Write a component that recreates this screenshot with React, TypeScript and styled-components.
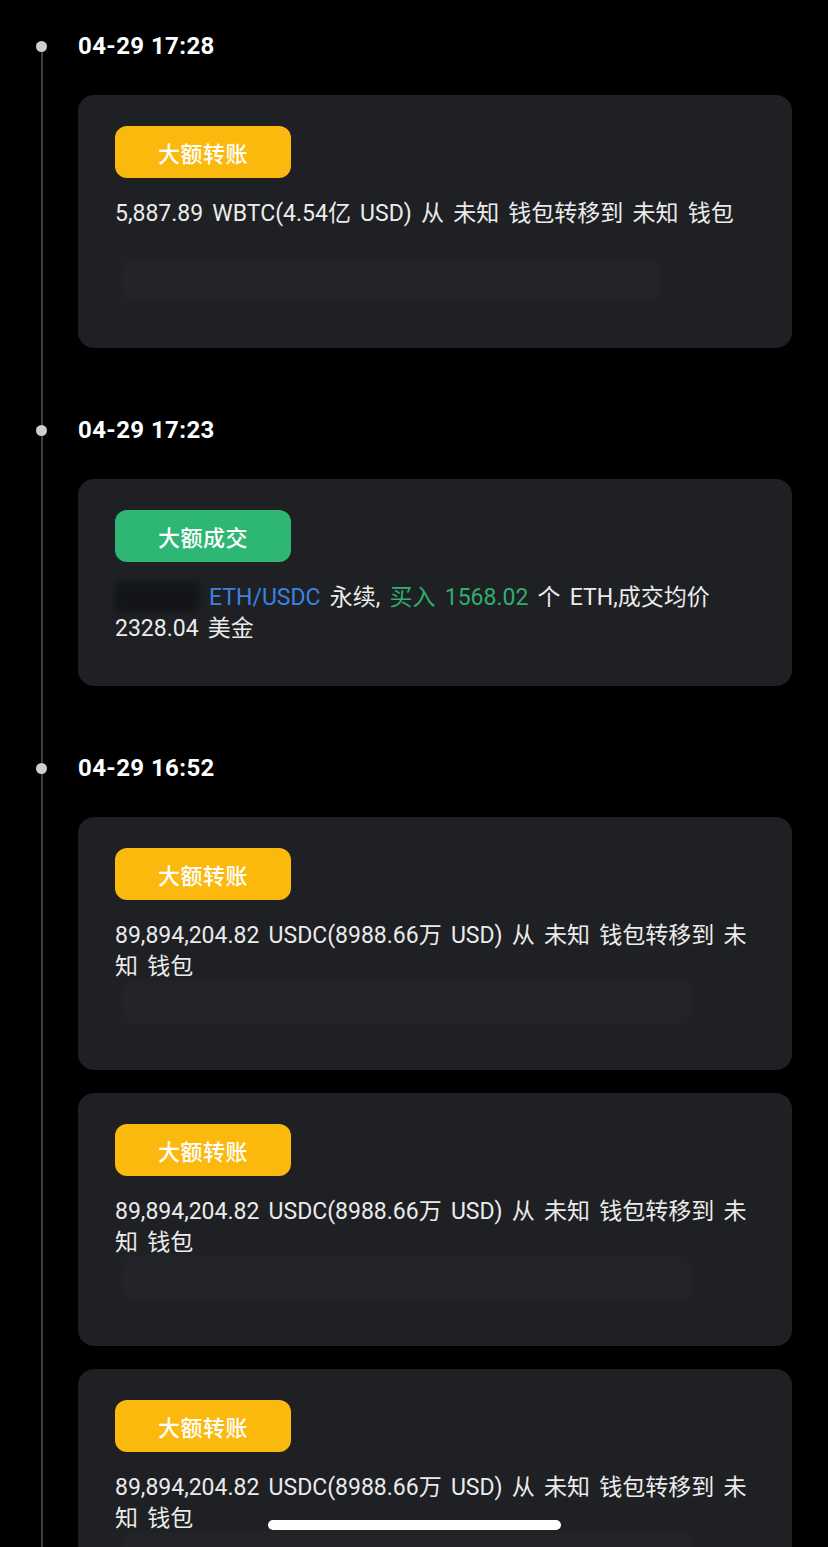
import React from "react";
import styled, { createGlobalStyle } from "styled-components";

const GlobalStyle = createGlobalStyle`
  html, body {
    margin: 0;
    padding: 0;
    background: #000;
  }
  body {
    font-family: Roboto, "Noto Sans CJK SC", sans-serif;
    color: #e8e8e8;
    overflow: hidden;
  }
`;

const Page = styled.div`
  position: relative;
  height: 1547px;
  overflow: hidden;
  padding: 0 36px 0 78px;
  box-sizing: border-box;
  display: flex;
  flex-direction: column;
  gap: 36px;
  &::before {
    content: "";
    position: absolute;
    left: 41px;
    top: 46px;
    bottom: 0;
    width: 2px;
    background: #3e3e40;
  }
`;

const Group = styled.section`
  display: flex;
  flex-direction: column;
  gap: 23px;
`;

const Header = styled.div`
  position: relative;
  height: 30px;
  margin-top: 31px;
  margin-bottom: 11px;
  display: flex;
  align-items: center;
  font-family: Roboto, sans-serif;
  font-weight: 700;
  font-size: 24px;
  color: #fff;
  letter-spacing: 0.4px;
`;

const Dot = styled.span`
  position: absolute;
  left: -42px;
  top: 50%;
  width: 11px;
  height: 11px;
  margin-top: -5.5px;
  border-radius: 50%;
  background: #cfcfcf;
`;

const Card = styled.div`
  background: #1e2023;
  border-radius: 16px;
  padding: 31px 32px 42px 37px;
  display: flex;
  flex-direction: column;
  align-items: flex-start;
  position: relative;
  z-index: 1;
`;

const Badge = styled.div<{ $tone: "yellow" | "green" }>`
  width: 176px;
  height: 52px;
  border-radius: 12px;
  background: ${(p) => (p.$tone === "yellow" ? "#fbb90d" : "#2db674")};
  color: #fff;
  font-family: "Noto Sans CJK SC", sans-serif;
  font-size: 22px;
  font-weight: 500;
  display: flex;
  align-items: center;
  justify-content: center;
  letter-spacing: 0.5px;
`;

const Body = styled.p`
  margin: 20px 0 0;
  font-family: Roboto, "Noto Sans CJK SC", sans-serif;
  font-size: 23px;
  line-height: 31px;
  word-spacing: 3.5px;
  color: #ebebeb;
`;

const Pair = styled.span`
  color: #3b82e0;
`;

const Buy = styled.span`
  color: #2fae6e;
`;

const Hidden = styled.span`
  display: inline-block;
  width: 84px;
  height: 30px;
  margin-right: 10px;
  vertical-align: -7px;
  background: #131518;
  border-radius: 4px;
  filter: blur(3px);
`;

const BlurRow = styled.div<{ $h: number; $w: number }>`
  margin-top: ${(p) => p.$h - 48}px;
  margin-left: 6px;
  height: 44px;
  width: ${(p) => p.$w}px;
  margin-bottom: 4px;
  border-radius: 10px;
  background: rgba(255, 255, 255, 0.025);
  filter: blur(6px);
`;

const HomeBar = styled.div`
  position: fixed;
  left: 268px;
  bottom: 17px;
  width: 293px;
  height: 10px;
  border-radius: 5px;
  background: #fff;
  z-index: 5;
`;

type Item =
  | { kind: "transfer"; text: string; blur: number; blurW: number }
  | { kind: "trade" };

const usdc = "89,894,204.82 USDC(8988.66万 USD) 从 未知 钱包转移到 未知 钱包";

const groups: { time: string; items: Item[] }[] = [
  {
    time: "04-29 17:28",
    items: [
      {
        kind: "transfer",
        text: "5,887.89 WBTC(4.54亿 USD) 从 未知 钱包转移到 未知 钱包",
        blur: 77,
        blurW: 540,
      },
    ],
  },
  { time: "04-29 17:23", items: [{ kind: "trade" }] },
  {
    time: "04-29 16:52",
    items: [
      { kind: "transfer", text: usdc, blur: 46, blurW: 570 },
      { kind: "transfer", text: usdc, blur: 46, blurW: 570 },
      { kind: "transfer", text: usdc, blur: 46, blurW: 570 },
    ],
  },
];

export default function App() {
  return (
    <>
      <GlobalStyle />
      <Page>
        {groups.map((g) => (
          <Group key={g.time}>
            <Header>
              <Dot />
              {g.time}
            </Header>
            {g.items.map((it, i) =>
              it.kind === "transfer" ? (
                <Card key={i}>
                  <Badge $tone="yellow">大额转账</Badge>
                  <Body>{it.text}</Body>
                  <BlurRow $h={it.blur} $w={it.blurW} />
                </Card>
              ) : (
                <Card key={i}>
                  <Badge $tone="green">大额成交</Badge>
                  <Body>
                    <Hidden />
                    <Pair>ETH/USDC</Pair> 永续, <Buy>买入 1568.02</Buy> 个
                    ETH,成交均价 2328.04 美金
                  </Body>
                </Card>
              )
            )}
          </Group>
        ))}
        <HomeBar />
      </Page>
    </>
  );
}
